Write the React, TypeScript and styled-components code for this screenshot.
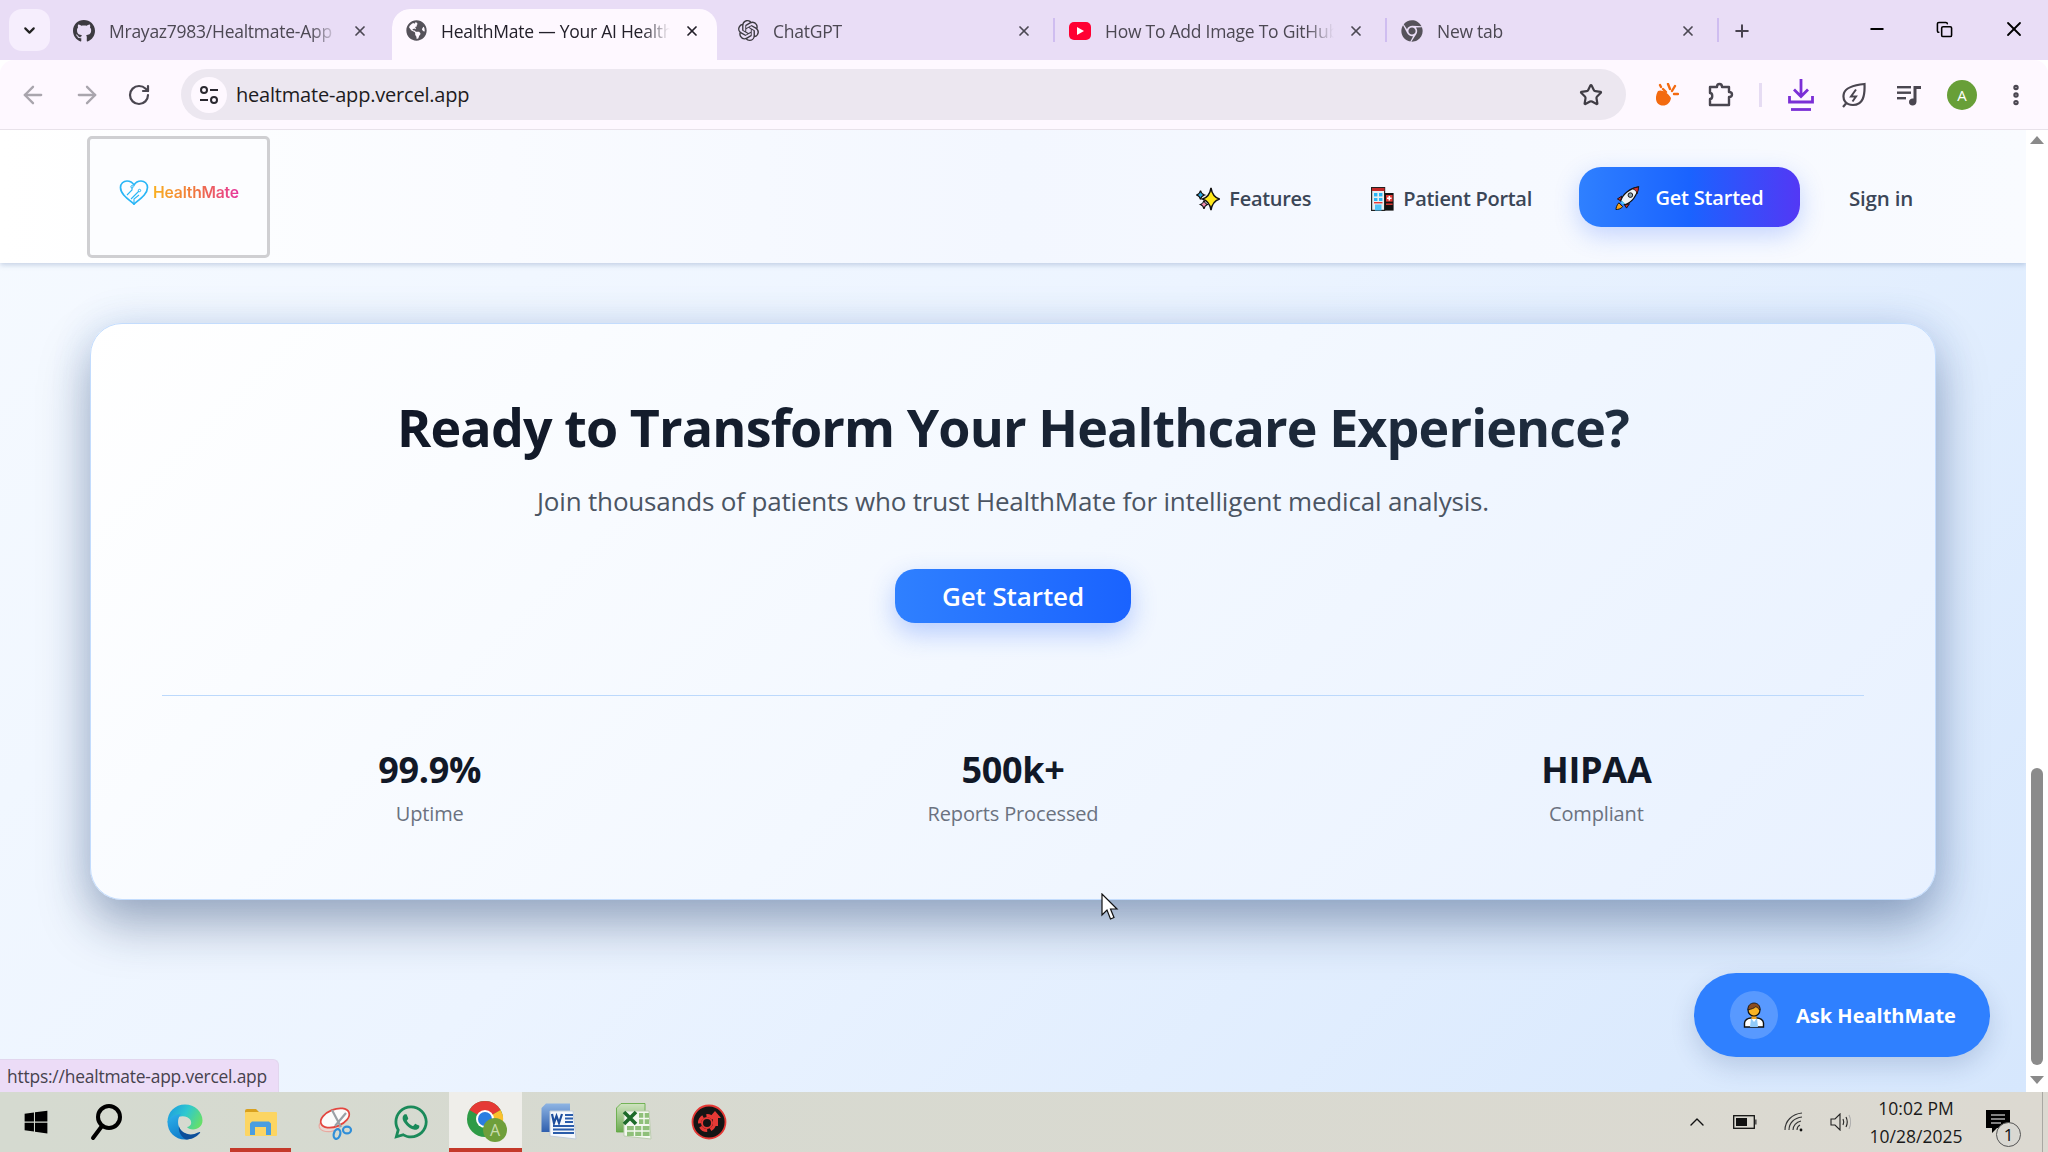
import styled, { createGlobalStyle } from 'styled-components'
import {
  ArrowLeft,
  ArrowRight,
  ChevronDown,
  ChevronUp,
  Copy,
  EllipsisVertical,
  Minus,
  Plus,
  RotateCw,
  Star,
  X,
} from 'lucide-react'
import { FaChrome, FaGithub, FaGlobeAmericas, FaWhatsapp, FaWindows } from 'react-icons/fa'
import { SiOpenai } from 'react-icons/si'

const GlobalStyle = createGlobalStyle`
  html, body {
    margin: 0;
    padding: 0;
    overflow: hidden;
    font-family: 'Open Sans', 'Noto Sans', sans-serif;
  }
  * { box-sizing: border-box; }
`

const Screen = styled.div`
  width: 2048px;
  height: 1152px;
  display: flex;
  flex-direction: column;
  position: relative;
  overflow: hidden;
`

/* browser chrome */
const TabStrip = styled.div`
  height: 60px;
  flex: none;
  background: #e9ddf6;
  display: flex;
  align-items: flex-end;
  padding-left: 9px;
  position: relative;
`
const TabMenu = styled.div`
  width: 41px;
  height: 42px;
  margin: 0 10px 9px 0;
  background: #f6eefd;
  border-radius: 13px;
  display: flex;
  align-items: center;
  justify-content: center;
  color: #222;
`
const Tab = styled.div<{ $active?: boolean; $divider?: boolean }>`
  width: 332px;
  height: 51px;
  flex: none;
  display: flex;
  align-items: center;
  padding: 0 24px 8px 13px;
  gap: 14px;
  position: relative;
  color: ${(p) => (p.$active ? '#23202a' : '#4c4853')};
  background: ${(p) => (p.$active ? '#fef8ff' : 'transparent')};
  border-radius: 18px 18px 0 0;
  ${(p) => p.$active && 'clip-path: inset(0 7px 0 0 round 18px 18px 0 0);'}
  &::after {
    content: '';
    display: ${(p) => (p.$divider ? 'block' : 'none')};
    position: absolute;
    right: 1px;
    top: 9px;
    height: 24px;
    width: 2px;
    background: #cfbdf0;
  }
`
const TabIcon = styled.span`
  width: 22px;
  height: 22px;
  flex: none;
  display: flex;
  align-items: center;
  justify-content: center;
`
const TabTitle = styled.span`
  flex: 1;
  font-size: 17.5px;
  letter-spacing: -0.25px;
  white-space: nowrap;
  overflow: hidden;
  mask-image: linear-gradient(to right, #000 88%, transparent 100%);
`
const YouTubeBadge = styled.span`
  width: 24px;
  height: 18px;
  background: #ff0033;
  border-radius: 5px;
  display: flex;
  align-items: center;
  justify-content: center;
  &::before {
    content: '';
    border-left: 7px solid #fff;
    border-top: 4px solid transparent;
    border-bottom: 4px solid transparent;
  }
`
const NewTabButton = styled.div`
  width: 26px;
  height: 30px;
  margin: 0 0 14px 9px;
  display: flex;
  align-items: center;
  justify-content: center;
  color: #48424f;
`
const WindowControls = styled.div`
  margin-left: auto;
  height: 60px;
  display: flex;
  align-items: center;
  padding-right: 22px;
  gap: 49px;
  align-self: flex-start;
  padding-bottom: 2px;
  padding-top: 0;
  color: #000;
`
const Toolbar = styled.div`
  height: 70px;
  flex: none;
  background: #fef8ff;
  border-radius: 14px 14px 0 0;
  border-bottom: 1px solid #e8e2ea;
  display: flex;
  align-items: center;
  padding-left: 19px;
  color: #4a4650;
`
const NavIcons = styled.div`
  display: flex;
  align-items: center;
  gap: 26px;
  margin-right: 30px;
`
const Omnibox = styled.div`
  width: 1445px;
  height: 51px;
  flex: none;
  background: #ece7f0;
  border-radius: 26px;
  display: flex;
  align-items: center;
  padding: 0 23px 0 10px;
`
const SiteInfo = styled.span`
  width: 36px;
  height: 36px;
  background: #fef8ff;
  border-radius: 50%;
  display: flex;
  align-items: center;
  justify-content: center;
  margin-right: 9px;
`
const Url = styled.span`
  flex: 1;
  font-size: 20px;
  letter-spacing: -0.2px;
  color: #1d1b20;
`
const ToolbarRight = styled.div`
  display: flex;
  align-items: center;
  margin-left: 14px;
`
const ToolSlot = styled.span<{ $width: number }>`
  width: ${(p) => p.$width}px;
  flex: none;
  display: flex;
  align-items: center;
  justify-content: center;
`
const Separator = styled.span`
  width: 3px;
  height: 24px;
  background: #e6dcf3;
`
const Avatar = styled.span`
  width: 30px;
  height: 30px;
  border-radius: 50%;
  background: #689f38;
  color: #fff;
  font-size: 15px;
  display: flex;
  align-items: center;
  justify-content: center;
`

/* page */
const Viewport = styled.div`
  flex: 1;
  display: flex;
  min-height: 0;
`
const Page = styled.div`
  flex: 1;
  display: flex;
  flex-direction: column;
  position: relative;
  background: linear-gradient(135deg, #f6faff 0%, #ecf4ff 45%, #d6e7fd 100%);
  overflow: hidden;
`
const Header = styled.header`
  height: 133px;
  flex: none;
  display: flex;
  align-items: center;
  justify-content: space-between;
  padding: 0 113px 0 87px;
  background: linear-gradient(90deg, #ffffff 0%, #f3f7ff 50%, #f9fbff 100%);
  box-shadow: 0 2px 5px rgba(90, 120, 170, 0.3);
  position: relative;
  z-index: 1;
`
const LogoBox = styled.div`
  width: 183px;
  height: 122px;
  border: 3px solid #cfcfd2;
  border-radius: 5px;
  background: #fcfdff;
  display: flex;
  align-items: center;
  justify-content: center;
  gap: 4px;
  padding: 0 0 8px 1px;
`
const LogoText = styled.span`
  font-family: Inter, sans-serif;
  font-size: 15.7px;
  font-weight: 600;
  letter-spacing: -0.2px;
  background: linear-gradient(90deg, #f9b020 0%, #f0753f 50%, #e6349f 100%);
  -webkit-background-clip: text;
  background-clip: text;
  color: transparent;
`
const Nav = styled.nav`
  display: flex;
  align-items: center;
`
const NavLink = styled.a<{ $gap: number }>`
  display: flex;
  align-items: center;
  gap: 9px;
  margin-right: ${(p) => p.$gap}px;
  padding-top: 4px;
  font-size: 20px;
  font-weight: 600;
  letter-spacing: -0.3px;
  color: #3b4657;
`
const PrimaryButton = styled.a`
  width: 221px;
  height: 60px;
  margin-right: 49px;
  padding-top: 2px;
  display: flex;
  align-items: center;
  justify-content: center;
  gap: 15px;
  border-radius: 22px;
  color: #fff;
  font-size: 20px;
  font-weight: 600;
  letter-spacing: -0.2px;
  background: linear-gradient(90deg, #2f80ff 0%, #1a63ff 50%, #5338f5 100%);
  box-shadow: 0 8px 24px rgba(40, 100, 250, 0.25);
`
const SignIn = styled.a`
  padding-top: 2px;
  font-size: 20.5px;
  font-weight: 600;
  letter-spacing: -0.2px;
  color: #3b4657;
`
const Main = styled.main`
  padding: 60px 90px 0;
`
const Card = styled.section`
  height: 577px;
  border: 1px solid #c3dcfd;
  border-radius: 32px;
  background: linear-gradient(135deg, #ffffff 0%, #f3f8ff 50%, #e8f1ff 100%);
  box-shadow: 0 25px 50px rgba(20, 45, 85, 0.36), 0 0 40px rgba(60, 120, 220, 0.14);
  display: flex;
  flex-direction: column;
  align-items: center;
  padding-top: 68px;
`
const Title = styled.h2`
  margin: 0;
  font-size: 52px;
  line-height: 70px;
  font-weight: 700;
  letter-spacing: -0.88px;
  background: linear-gradient(90deg, #111827, #1f2d3f);
  -webkit-background-clip: text;
  background-clip: text;
  color: transparent;
`
const Subtitle = styled.p`
  margin: 21px 0 0;
  font-size: 26px;
  line-height: 36px;
  letter-spacing: -0.18px;
  color: #4b5563;
`
const CtaButton = styled.a`
  width: 236px;
  height: 54px;
  margin-top: 50px;
  display: flex;
  align-items: center;
  justify-content: center;
  border-radius: 20px;
  color: #fff;
  font-size: 26px;
  font-weight: 600;
  letter-spacing: -0.1px;
  background: linear-gradient(90deg, #2f80ff 0%, #1a63ff 100%);
  box-shadow: 0 10px 26px rgba(40, 100, 250, 0.3);
`
const Stats = styled.div`
  width: 1702px;
  margin-top: 72px;
  border-top: 1px solid #bcd9fc;
  padding-top: 50px;
  display: grid;
  grid-template-columns: repeat(3, 1fr);
  column-gap: 48px;
  text-align: center;
`
const Stat = styled.div`
  display: flex;
  flex-direction: column;
  align-items: center;
`
const StatValue = styled.span`
  font-size: 36px;
  line-height: 48px;
  font-weight: 700;
  letter-spacing: -0.3px;
  color: #111827;
`
const StatLabel = styled.span`
  margin-top: 6px;
  font-size: 20px;
  line-height: 28px;
  letter-spacing: -0.15px;
  color: #6b7280;
`
const AskButton = styled.a`
  position: absolute;
  left: 1694px;
  top: 843px;
  width: 296px;
  height: 84px;
  border-radius: 42px;
  background: #2f80ff;
  box-shadow: 0 10px 24px rgba(30, 60, 120, 0.18);
  display: flex;
  align-items: center;
  padding-left: 36px;
  gap: 18px;
  color: #fff;
  font-size: 20px;
  font-weight: 700;
`
const AskAvatar = styled.span`
  width: 48px;
  height: 48px;
  border-radius: 50%;
  background: rgba(255, 255, 255, 0.2);
  display: flex;
  align-items: center;
  justify-content: center;
`
const StatusBubble = styled.div`
  position: absolute;
  left: 0;
  bottom: 0;
  width: 279px;
  height: 33px;
  background: #ecdcf7;
  border-top: 1px solid #e2d6ee;
  border-right: 1px solid #e2d6ee;
  border-radius: 0 6px 0 0;
  display: flex;
  align-items: center;
  padding-left: 7px;
  font-size: 17.4px;
  letter-spacing: -0.2px;
  color: #46424d;
`
const Cursor = styled.svg`
  position: absolute;
  left: 1101px;
  top: 763px;
`
const ScrollTrack = styled.div`
  width: 22px;
  flex: none;
  background: #fff;
  display: flex;
  flex-direction: column;
  align-items: center;
  justify-content: space-between;
  padding: 6px 0 8px;
`
const ScrollThumb = styled.div`
  width: 12px;
  height: 297px;
  margin-top: auto;
  margin-bottom: 11px;
  background: #8b8b8b;
  border-radius: 6px;
`
const ArrowUp = styled.span`
  border-left: 7px solid transparent;
  border-right: 7px solid transparent;
  border-bottom: 8px solid #8a8a8a;
`
const ArrowDown = styled.span`
  border-left: 7px solid transparent;
  border-right: 7px solid transparent;
  border-top: 8px solid #8a8a8a;
`

/* taskbar */
const Taskbar = styled.footer`
  height: 60px;
  flex: none;
  background: linear-gradient(90deg, #d5dad0 0%, #dcd9d1 100%);
  display: flex;
  align-items: center;
`
const TaskSlot = styled.div<{ $width?: number; $open?: boolean; $active?: boolean; $padRight?: number }>`
  width: ${(p) => p.$width ?? 75}px;
  height: 60px;
  flex: none;
  display: flex;
  align-items: center;
  justify-content: center;
  background: ${(p) => (p.$active ? '#efeeea' : 'transparent')};
  border-bottom: 4px solid ${(p) => (p.$open ? '#c4392a' : 'transparent')};
  padding: 4px ${(p) => p.$padRight ?? 0}px 0 0;
`
const Tray = styled.div`
  margin-left: auto;
  margin-right: 5px;
  display: flex;
  align-items: center;
  height: 60px;
  padding-right: 2px;
  border-right: 1px solid #a9a8a3;
  color: #111;
`
const TrayIcon = styled.span<{ $width: number }>`
  width: ${(p) => p.$width}px;
  display: flex;
  justify-content: center;
`
const Clock = styled.div`
  width: 106px;
  margin-right: 5px;
  text-align: center;
  white-space: nowrap;
  font-size: 17.5px;
  line-height: 28px;
  color: #1a1a1a;
`
const NoticeWrap = styled.span`
  width: 66px;
  display: flex;
  padding-left: 12px;
  position: relative;
`
const NoticeBadge = styled.span`
  position: absolute;
  left: 22px;
  top: 12px;
  width: 25px;
  height: 25px;
  border-radius: 50%;
  border: 1px solid #555;
  font-size: 17px;
  display: flex;
  align-items: center;
  justify-content: center;
  background: #d9d8d2;
  color: #111;
`

const HeartLogo = () => (
  <svg width="30" height="26" viewBox="0 0 30 26" fill="none" stroke="#29b6f6" strokeWidth="1.7">
    <path d="M15 24 C9 19 1.5 14 1.5 7.5 C1.5 3.5 4.5 1 8 1 C11 1 13.5 2.5 15 5 C16.5 2.5 19 1 22 1 C25.5 1 28.5 3.5 28.5 7.5 C28.5 14 21 19 15 24 Z" />
    <path d="M8 15 L13 10 V7.5 M12 19 L20 11 M15 25 L15 19 L20 15" strokeWidth="1.1" />
    <circle cx="13" cy="6.8" r="1.2" strokeWidth="1" />
    <circle cx="20.5" cy="10.5" r="1.2" strokeWidth="1" />
  </svg>
)

const SparkleIcon = () => (
  <svg width="24" height="24" viewBox="0 0 24 24">
    <path d="M15 0.8 C15.8 6 17.5 10 23.4 12 C17.5 14 15.8 18 15 23.2 C14.2 18 12.5 14 6.6 12 C12.5 10 14.2 6 15 0.8 Z" fill="#ffe81a" stroke="#111" strokeWidth="1.5" />
    <path d="M4.5 3.5 C5 6 5.5 7 8.5 8 C5.5 9 5 10 4.5 12.5 C4 10 3.5 9 0.6 8 C3.5 7 4 6 4.5 3.5 Z" fill="#29a7e1" stroke="#111" strokeWidth="1.2" />
    <path d="M8 13.5 C8.4 15.5 9 16.5 11.5 17.5 C9 18.5 8.4 19.5 8 22 C7.6 19.5 7 18.5 4.4 17.5 C7 16.5 7.6 15.5 8 13.5 Z" fill="#f48fb1" stroke="#111" strokeWidth="1.2" />
  </svg>
)

const HospitalIcon = () => (
  <svg width="23" height="24" viewBox="0 0 23 24">
    <rect x="0.6" y="0.6" width="13" height="22.8" fill="#e8eef2" stroke="#222" strokeWidth="1.2" />
    <rect x="1" y="1" width="12.5" height="3" fill="#c62828" />
    <rect x="3" y="6" width="3.4" height="3.4" fill="#29b6f6" />
    <rect x="8" y="6" width="3.4" height="3.4" fill="#29b6f6" />
    <rect x="3" y="11" width="3.4" height="3" fill="#29b6f6" />
    <rect x="8" y="11" width="3.4" height="3" fill="#29b6f6" />
    <rect x="3" y="15" width="8.5" height="1.4" fill="#e53935" />
    <rect x="4" y="17.5" width="6.5" height="6" fill="#4fc3f7" />
    <rect x="14" y="6" width="8.6" height="17.6" fill="#111" />
    <rect x="15" y="8" width="6.6" height="6.6" fill="#e53935" />
    <path d="M18.3 9 V13.6 M16 11.3 H20.6" stroke="#fff" strokeWidth="1.5" />
    <rect x="15" y="16.5" width="6.6" height="1.4" fill="#e53935" />
  </svg>
)

const RocketIcon = () => (
  <svg width="25" height="26" viewBox="0 0 26 26">
    <path d="M4 18 C1.5 20.5 1 24 1 25 C3 25 6 24.5 8 22 Z" fill="#f6a21a" stroke="#111" />
    <path d="M7 11 L2.5 14 L6 16 Z M15 19 L12 23.5 L10 20 Z" fill="#d32f2f" stroke="#111" />
    <path d="M6 16 C8 9 15 3 24.5 1.5 C23 11 17 18 10 20 Z" fill="#eef3f6" stroke="#111" strokeWidth="1.2" />
    <path d="M18 3.4 C20.5 4 22.8 6 23 8.6 C24 6 24.4 3.4 24.5 1.5 C22.2 1.8 20 2.5 18 3.4 Z" fill="#d32f2f" stroke="#111" strokeWidth="0.8" />
    <circle cx="16" cy="10" r="2.4" fill="#90a4ae" stroke="#111" />
    <path d="M7 15.5 L10.5 19 L8 20 L6 18 Z" fill="#4fc3f7" />
  </svg>
)

const DoctorIcon = () => (
  <svg width="22" height="26" viewBox="0 0 22 26">
    <path d="M1.5 25 V21 C1.5 18 5 16 8 16 H14 C17 16 20.5 18 20.5 21 V25 Z" fill="#fff" stroke="#111" strokeWidth="1.4" />
    <path d="M8 16 L11 20 L14 16 L15 25 H7 Z" fill="#90caf9" />
    <rect x="8.5" y="12" width="5" height="5" fill="#f5a623" />
    <circle cx="11" cy="8" r="6" fill="#fbb324" stroke="#111" strokeWidth="1.2" />
    <path d="M5 8 C4.5 3 8 1 11 1 C14 1 17.5 3 17 8 C15 7 14 5 13 4.5 C11 6.5 8 7 5 8 Z" fill="#8a4b1f" stroke="#111" strokeWidth="0.8" />
  </svg>
)

const EdgeIcon = () => (
  <svg width="36" height="36" viewBox="0 0 36 36">
    <defs>
      <linearGradient id="edgeTop" x1="0" y1="0.2" x2="1" y2="0.6">
        <stop offset="0" stopColor="#1c9ce0" />
        <stop offset="0.5" stopColor="#2fc8cf" />
        <stop offset="1" stopColor="#66df6a" />
      </linearGradient>
      <linearGradient id="edgeLeft" x1="0" y1="0" x2="0.6" y2="1">
        <stop offset="0" stopColor="#2eb1ea" />
        <stop offset="1" stopColor="#0d78c8" />
      </linearGradient>
    </defs>
    <path d="M0.5 18 C0.5 8 8 0.5 18 0.5 C28 0.5 35.5 8 35.5 16.5 C35.5 22 31 25.5 26 25.5 C23 25.5 21 24.5 20 23 C24 22.5 25 19 23.5 16 C21 11.5 13 11 8 14.5 C4 17 1.5 20 0.5 18 Z" fill="url(#edgeTop)" />
    <path d="M0.5 18 C2.5 13 8 9.5 14 10.5 C11 13 10 19 12.5 24 C15.5 30 24 33 30 30 C26 34 22 35.5 18 35.5 C8 35.5 0.5 28 0.5 18 Z" fill="url(#edgeLeft)" />
    <path d="M12 22.5 C14 29 23 33 31 28.5 C33 27.5 33.5 28 33 29 C29 33.5 24 35.5 19 35.5 C14 33 11 27 12 22.5 Z" fill="#0c4f9a" />
  </svg>
)

const FolderIcon = () => (
  <svg width="32" height="27" viewBox="0 0 32 27">
    <path d="M0 2 Q0 0 2 0 H11 L15 4 H0 Z" fill="#d9a11e" />
    <rect x="0" y="3" width="32" height="24" rx="1" fill="#fcd562" />
    <path d="M5 19 V14.5 L7 12.5 H24 L26 14.5 V26 H21 V18 H10 V26 H5 Z" fill="#4a9ee0" />
  </svg>
)

const SnipIcon = () => (
  <svg width="36" height="36" viewBox="0 0 36 36" fill="none">
    <ellipse cx="12" cy="21" rx="11" ry="6.5" fill="#e9d8d2" stroke="#e8a9a0" strokeWidth="1.1" transform="rotate(-8 12 21)" />
    <ellipse cx="17" cy="14" rx="15" ry="8.5" fill="#fbfbfb" stroke="#e3463f" strokeWidth="1.7" transform="rotate(-22 17 14)" />
    <path d="M14 6 L23 23 M28 9 L17 22" stroke="#9aa0a6" strokeWidth="2.2" />
    <ellipse cx="19" cy="30" rx="3.2" ry="5" stroke="#2f8ed8" strokeWidth="2.2" transform="rotate(15 19 30)" />
    <ellipse cx="29" cy="26" rx="4" ry="3.4" stroke="#2f8ed8" strokeWidth="2.2" />
  </svg>
)

const ChromeTaskIcon = () => (
  <svg width="44" height="44" viewBox="0 0 44 44">
    <g transform="translate(2 0)">
      <circle cx="19" cy="19" r="18" fill="#2e9b46" />
      <path d="M19 19 L3.4 10 A18 18 0 0 1 34.6 10 Z" fill="#e53935" />
      <path d="M19 19 L34.6 10 A18 18 0 0 1 19 37 Z" fill="#fbc02d" />
      <circle cx="19" cy="19" r="9" fill="#fff" />
      <circle cx="19" cy="19" r="7" fill="#2a7de1" />
    </g>
    <circle cx="31" cy="30" r="12" fill="#6f9f3b" />
    <text x="31" y="36" textAnchor="middle" fontSize="16" fontFamily="Open Sans, sans-serif" fill="#c9dcae">A</text>
  </svg>
)

const WordIcon = () => (
  <svg width="36" height="38" viewBox="0 0 36 38">
    <defs>
      <linearGradient id="wordBack" x1="0" y1="0" x2="0" y2="1">
        <stop offset="0" stopColor="#8eb4e3" />
        <stop offset="1" stopColor="#2f5fae" />
      </linearGradient>
    </defs>
    <path d="M0.5 5 L5 0.5 H29 V10 H10 V29 H0.5 Z" fill="url(#wordBack)" />
    <path d="M9 8 H32 L35 36 L9 33 Z" fill="#f5f8fc" stroke="#c3cdd9" />
    <path d="M24 12 H32 M24 15.5 H32 M24 19 H32" stroke="#2a5caa" strokeWidth="2" />
    <path d="M12 23 H33 M12 26.5 H33 M12 30 H33" stroke="#2a5caa" strokeWidth="2" />
    <path d="M11 11 L13 20 L15.5 13 L18 20 L21 11" fill="none" stroke="#1d4d9b" strokeWidth="2.2" />
  </svg>
)

const ExcelIcon = () => (
  <svg width="36" height="38" viewBox="0 0 36 38">
    <defs>
      <linearGradient id="excelBack" x1="0" y1="0" x2="0" y2="1">
        <stop offset="0" stopColor="#cfe3c0" />
        <stop offset="1" stopColor="#6aaa4f" />
      </linearGradient>
    </defs>
    <path d="M0.5 5 L5 0.5 H29 V10 H10 V29 H0.5 Z" fill="url(#excelBack)" stroke="#5aa83a" strokeWidth="0.8" />
    <path d="M8 8 H33 L35 36 L8 33 Z" fill="#f4f8f0" stroke="#bccdb0" />
    <path d="M23 10 H33 V21 H23 Z M11 23 H33.6 V33 H11 Z" fill="#8fc07a" />
    <path d="M23 15.5 H33 M28 10 V21 M11 28 H33.6 M18.5 23 V33 M26 23 V33" stroke="#f4f8f0" strokeWidth="1.4" />
    <path d="M8 9 L20 21 M20 9 L8 21" stroke="#1d6b2a" strokeWidth="3.6" />
  </svg>
)

const IobitIcon = () => (
  <svg width="36" height="36" viewBox="0 0 36 36">
    <circle cx="18" cy="18" r="16.5" fill="#141414" stroke="#e53935" strokeWidth="1.8" />
    <circle cx="16" cy="19" r="7.5" fill="none" stroke="#e53935" strokeWidth="3" strokeDasharray="8 3.5" />
    <circle cx="16" cy="19" r="5" fill="none" stroke="#e53935" strokeWidth="2" />
    <path d="M24 7 L30 14 H27 V22 H22 V14 H18 Z" fill="#e53935" />
    <circle cx="16" cy="19" r="1.6" fill="#141414" />
  </svg>
)

const OrangeBadge = () => (
  <svg width="24" height="24" viewBox="0 0 24 24">
    <path d="M3 8 C7 6 13 10 16 15 C15 21 10 24 5 22 C0 20 0 13 3 8 Z" fill="#f36a10" />
    <path d="M8 6 L11 9 M5 2 L6 4 M13 1 L15 6 M20 3 L17 8 M23 11 L19 11" stroke="#f36a10" strokeWidth="2.4" strokeLinecap="round" />
  </svg>
)

const ExtensionIcon = () => (
  <svg width="26" height="26" viewBox="0 0 26 26" fill="none" stroke="#4a4650" strokeWidth="2.4" strokeLinejoin="round">
    <path d="M2 5 H9 C9 1 14 1 14 5 H21 V10 C25 10 25 15 21 15 V23 H2 V17 C5 17 5 11 2 11 Z" />
  </svg>
)

const DownloadIcon = () => (
  <svg width="26" height="32" viewBox="0 0 26 32" fill="none" stroke="#7b2fd6" strokeWidth="2.8">
    <path d="M13 0 V17 M6 10.5 L13 17.5 L20 10.5" />
    <path d="M1.5 17 V23 H24.5 V17" />
    <path d="M3 30.5 H23" />
  </svg>
)

const LeafBolt = () => (
  <svg width="24" height="26" viewBox="0 0 24 26" fill="none" stroke="#4a4650" strokeWidth="2.2">
    <path d="M22.5 2 C23 14 21 23 11 23 C4 23 0 18 2 11 C4 5 13 3 22.5 2 Z" />
    <path d="M14 7.5 L9 14.5 H14 L10.5 19.5" fill="none" strokeWidth="2" />
    <path d="M1 25 L4 21.5" />
  </svg>
)

const QueueIcon = () => (
  <svg width="24" height="22" viewBox="0 0 24 22" fill="#4a4650">
    <rect x="0" y="2" width="14" height="2.4" />
    <rect x="0" y="7.5" width="14" height="2.4" />
    <rect x="0" y="13" width="9" height="2.4" />
    <path d="M16.5 2 H24 V5 H19.5 V17.5 C19.5 20 17.8 21.6 15.6 21.6 C13.4 21.6 12 20 12 18 C12 16 13.6 14.5 15.6 14.5 C15.9 14.5 16.2 14.5 16.5 14.6 Z" />
  </svg>
)

const Battery = () => (
  <svg width="24" height="14" viewBox="0 0 24 14">
    <rect x="0.7" y="0.7" width="20.6" height="12.6" fill="none" stroke="#111" strokeWidth="1.3" />
    <rect x="3" y="3" width="11" height="8" fill="#111" />
    <rect x="22" y="4.5" width="1.6" height="5" fill="#555" />
  </svg>
)

const WifiIcon = () => (
  <svg width="20" height="20" viewBox="0 0 20 20" fill="none" stroke="#333" strokeWidth="1.1">
    <path d="M1 18 C1 9 8 2 18 1 M5 18 C5 11 10 6 18 5 M9 18 C9 14 12 10 17 9 M13 18 C13 16 14 14 16 13" />
    <circle cx="17" cy="18" r="1.4" fill="#111" stroke="none" />
  </svg>
)

const VolumeIcon = () => (
  <svg width="22" height="18" viewBox="0 0 22 18" fill="none" stroke="#222" strokeWidth="1.1">
    <path d="M1 6 H5 L10 1 V17 L5 12 H1 Z" />
    <path d="M13 6 C14 8 14 10 13 12 M16 4 C17.5 7 17.5 11 16 14" />
    <path d="M19 2 C21 6 21 12 19 16" stroke="#aaa" />
  </svg>
)

const NoticeIcon = () => (
  <svg width="24" height="24" viewBox="0 0 24 24">
    <path d="M0 0 H24 V18 H11 L6 23 V18 H0 Z" fill="#000" />
    <path d="M5 5 H19 M5 9 H19 M5 13 H15" stroke="#fff" strokeWidth="1.2" />
  </svg>
)

const stats = [
  { value: '99.9%', label: 'Uptime' },
  { value: '500k+', label: 'Reports Processed' },
  { value: 'HIPAA', label: 'Compliant' },
]

const App = () => {
  return (
    <Screen>
      <GlobalStyle />
      <TabStrip>
        <TabMenu>
          <ChevronDown size={17} strokeWidth={3} />
        </TabMenu>
        <Tab>
          <TabIcon><FaGithub size={24} color="#3c3a40" /></TabIcon>
          <TabTitle>Mrayaz7983/Healtmate-App</TabTitle>
          <X size={16} strokeWidth={2.6} />
        </Tab>
        <Tab $active>
          <TabIcon><FaGlobeAmericas size={21} color="#55525a" /></TabIcon>
          <TabTitle>HealthMate — Your AI Health</TabTitle>
          <X size={16} strokeWidth={2.6} />
        </Tab>
        <Tab $divider>
          <TabIcon><SiOpenai size={21} color="#3c3a40" /></TabIcon>
          <TabTitle>ChatGPT</TabTitle>
          <X size={16} strokeWidth={2.6} />
        </Tab>
        <Tab $divider>
          <TabIcon><YouTubeBadge /></TabIcon>
          <TabTitle>How To Add Image To GitHub</TabTitle>
          <X size={16} strokeWidth={2.6} />
        </Tab>
        <Tab $divider>
          <TabIcon><FaChrome size={22} color="#55525a" /></TabIcon>
          <TabTitle>New tab</TabTitle>
          <X size={16} strokeWidth={2.6} />
        </Tab>
        <NewTabButton>
          <Plus size={20} strokeWidth={2.4} />
        </NewTabButton>
        <WindowControls>
          <Minus size={20} strokeWidth={2.2} />
          <Copy size={17} strokeWidth={2.2} />
          <X size={24} strokeWidth={1.8} />
        </WindowControls>
      </TabStrip>

      <Toolbar>
        <NavIcons>
          <ArrowLeft size={28} strokeWidth={2} color="#a9a5ad" />
          <ArrowRight size={28} strokeWidth={2} color="#a9a5ad" />
          <RotateCw size={24} strokeWidth={2.2} />
        </NavIcons>
        <Omnibox>
          <SiteInfo>
            <svg width="22" height="22" viewBox="0 0 22 22" fill="none" stroke="#2a2830" strokeWidth="2">
              <circle cx="6" cy="6" r="3" />
              <path d="M12 6 H20 M2 16 H10" />
              <circle cx="16" cy="16" r="3" />
            </svg>
          </SiteInfo>
          <Url>healtmate-app.vercel.app</Url>
          <Star size={24} strokeWidth={2.2} color="#3f3c44" />
        </Omnibox>
        <ToolbarRight>
          <ToolSlot $width={54}><OrangeBadge /></ToolSlot>
          <ToolSlot $width={54}><ExtensionIcon /></ToolSlot>
          <ToolSlot $width={24}><Separator /></ToolSlot>
          <ToolSlot $width={58}><DownloadIcon /></ToolSlot>
          <ToolSlot $width={48}><LeafBolt /></ToolSlot>
          <ToolSlot $width={62}><QueueIcon /></ToolSlot>
          <ToolSlot $width={44}><Avatar>A</Avatar></ToolSlot>
          <ToolSlot $width={64}><EllipsisVertical size={26} strokeWidth={3} /></ToolSlot>
        </ToolbarRight>
      </Toolbar>

      <Viewport>
        <Page>
          <Header>
            <LogoBox>
              <HeartLogo />
              <LogoText>HealthMate</LogoText>
            </LogoBox>
            <Nav>
              <NavLink $gap={60}><SparkleIcon />Features</NavLink>
              <NavLink $gap={47}><HospitalIcon />Patient Portal</NavLink>
              <PrimaryButton><RocketIcon />Get Started</PrimaryButton>
              <SignIn>Sign in</SignIn>
            </Nav>
          </Header>
          <Main>
            <Card>
              <Title>Ready to Transform Your Healthcare Experience?</Title>
              <Subtitle>Join thousands of patients who trust HealthMate for intelligent medical analysis.</Subtitle>
              <CtaButton>Get Started</CtaButton>
              <Stats>
                {stats.map((s) => (
                  <Stat key={s.label}>
                    <StatValue>{s.value}</StatValue>
                    <StatLabel>{s.label}</StatLabel>
                  </Stat>
                ))}
              </Stats>
            </Card>
          </Main>
          <AskButton>
            <AskAvatar><DoctorIcon /></AskAvatar>
            Ask HealthMate
          </AskButton>
          <StatusBubble>https://healtmate-app.vercel.app</StatusBubble>
          <Cursor width="20" height="28" viewBox="0 0 20 28">
            <path d="M1 1 V22 L6 17 L9.5 26 L13 24.5 L9.5 16 H16 Z" fill="#fff" stroke="#111" strokeWidth="1.2" />
          </Cursor>
        </Page>
        <ScrollTrack>
          <ArrowUp />
          <ScrollThumb />
          <ArrowDown />
        </ScrollTrack>
      </Viewport>

      <Taskbar>
        <TaskSlot $width={72}><FaWindows size={26} color="#000" /></TaskSlot>
        <TaskSlot $width={68}>
          <svg width="34" height="38" viewBox="0 0 34 38" fill="none" stroke="#000" strokeWidth="4">
            <circle cx="20" cy="14" r="11" />
            <path d="M13 23 L4 35" strokeLinecap="round" />
          </svg>
        </TaskSlot>
        <TaskSlot $width={90}><EdgeIcon /></TaskSlot>
        <TaskSlot $width={61} $open><FolderIcon /></TaskSlot>
        <TaskSlot $width={89}><SnipIcon /></TaskSlot>
        <TaskSlot $width={69} $padRight={8}><FaWhatsapp size={38} color="#1a8a5a" /></TaskSlot>
        <TaskSlot $width={73} $active $open><ChromeTaskIcon /></TaskSlot>
        <TaskSlot $width={74}><WordIcon /></TaskSlot>
        <TaskSlot $width={76}><ExcelIcon /></TaskSlot>
        <TaskSlot $width={74}><IobitIcon /></TaskSlot>
        <Tray>
          <TrayIcon $width={48}><ChevronUp size={24} strokeWidth={1.4} /></TrayIcon>
          <TrayIcon $width={48}><Battery /></TrayIcon>
          <TrayIcon $width={50}><WifiIcon /></TrayIcon>
          <TrayIcon $width={44}><VolumeIcon /></TrayIcon>
          <Clock>
            10:02 PM
            <br />
            10/28/2025
          </Clock>
          <NoticeWrap>
            <NoticeIcon />
            <NoticeBadge>1</NoticeBadge>
          </NoticeWrap>
        </Tray>
      </Taskbar>
    </Screen>
  )
}

export default App
